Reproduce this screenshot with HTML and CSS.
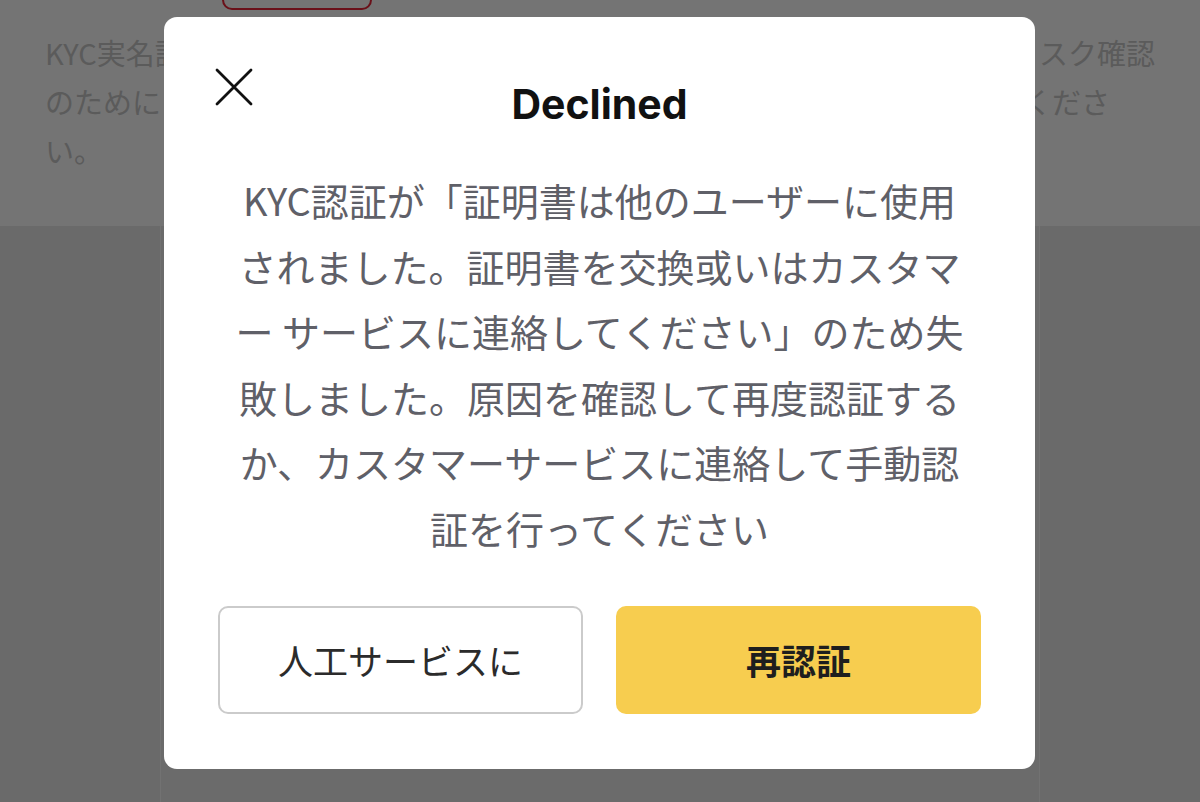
FILE: index.html
```html
<!DOCTYPE html>
<html lang="ja">
<head>
  <meta charset="UTF-8">
  <title>KYC Declined</title>
  <link rel="stylesheet" href="styles.css">
</head>
<body>
  <div class="page">
    <div class="page-top">
      <div class="tag"></div>
      <div class="intro">
        <div class="intro-line"><span>KYC実名認証は</span><span>リスク確認</span></div>
        <div class="intro-line short"><span>のためにご協力</span><span>ご協力くださ</span></div>
        <div class="intro-line"><span>い。</span></div>
      </div>
    </div>
    <div class="page-bottom">
      <div class="card"></div>
    </div>
  </div>

  <div class="modal">
    <button class="close" aria-label="close">
      <svg width="38" height="38" viewBox="0 0 38 38">
        <path d="M2 2 L36 36 M36 2 L2 36" stroke="#111" stroke-width="2.8" stroke-linecap="round" fill="none"/>
      </svg>
    </button>
    <h2 class="title">Declined</h2>
    <p class="message">
      KYC認証が「証明書は他のユーザーに使用<br>
      されました。証明書を交換或いはカスタマ<br>
      ー サービスに連絡してください」のため失<br>
      敗しました。原因を確認して再度認証する<br>
      か、カスタマーサービスに連絡して手動認<br>
      証を行ってください
    </p>
    <div class="actions">
      <button class="btn btn-outline">人工サービスに</button>
      <button class="btn btn-primary">再認証</button>
    </div>
  </div>
</body>
</html>
```

FILE: styles.css
```css
body {
  margin: 0;
  background: #6a6a6a;
  font-family: "Noto Sans CJK JP", "Noto Sans", sans-serif;
  overflow: hidden;
}

.page {
  height: 802px;
  display: flex;
  flex-direction: column;
}

.page-top {
  background: #747474;
  height: 226px;
  overflow: hidden;
}

.tag {
  width: 146px;
  height: 36px;
  margin: -30px 0 0 222px;
  border: 2px solid #6a1019;
  border-radius: 10px;
}

.intro {
  margin-top: 18px;
  padding: 0 45px;
  color: #5b5b5b;
  font-size: 29px;
  line-height: 49px;
}

.intro-line {
  display: flex;
  justify-content: space-between;
}

.intro-line.short span:last-child {
  margin-right: 45px;
}

.page-bottom {
  flex: 1;
  display: flex;
  justify-content: center;
}

.card {
  width: 878px;
  background: #6b6b6b;
  border-left: 1px solid #727272;
  border-right: 1px solid #727272;
}

/* dialog */
.modal {
  position: fixed;
  top: 17px;
  left: 164px;
  width: 871px;
  height: 752px;
  box-sizing: border-box;
  padding: 55px 54px;
  background: #fff;
  border-radius: 13px;
}

.close {
  position: absolute;
  top: 51px;
  left: 51px;
  padding: 0;
  border: none;
  background: none;
  line-height: 0;
}

.title {
  margin: 0;
  text-align: center;
  font-family: Inter, "Liberation Sans", sans-serif;
  font-size: 41px;
  font-weight: 700;
  line-height: 64px;
  color: #111;
}

.message {
  margin: 31px 0 0;
  text-align: center;
  white-space: nowrap;
  font-size: 38px;
  line-height: 65.6px;
  color: #5f6068;
}

.actions {
  margin-top: 45px;
  display: grid;
  grid-template-columns: 1fr 1fr;
  gap: 33px;
}

.btn {
  height: 108px;
  border-radius: 10px;
  font-family: "Noto Sans CJK JP", sans-serif;
  font-size: 35px;
  cursor: pointer;
}

.btn-outline {
  background: #fff;
  border: 2px solid #cbcbcb;
  color: #2b2b2b;
}

.btn-primary {
  background: #f7cd4f;
  border: none;
  color: #1e1e1e;
  font-weight: 700;
}
```
